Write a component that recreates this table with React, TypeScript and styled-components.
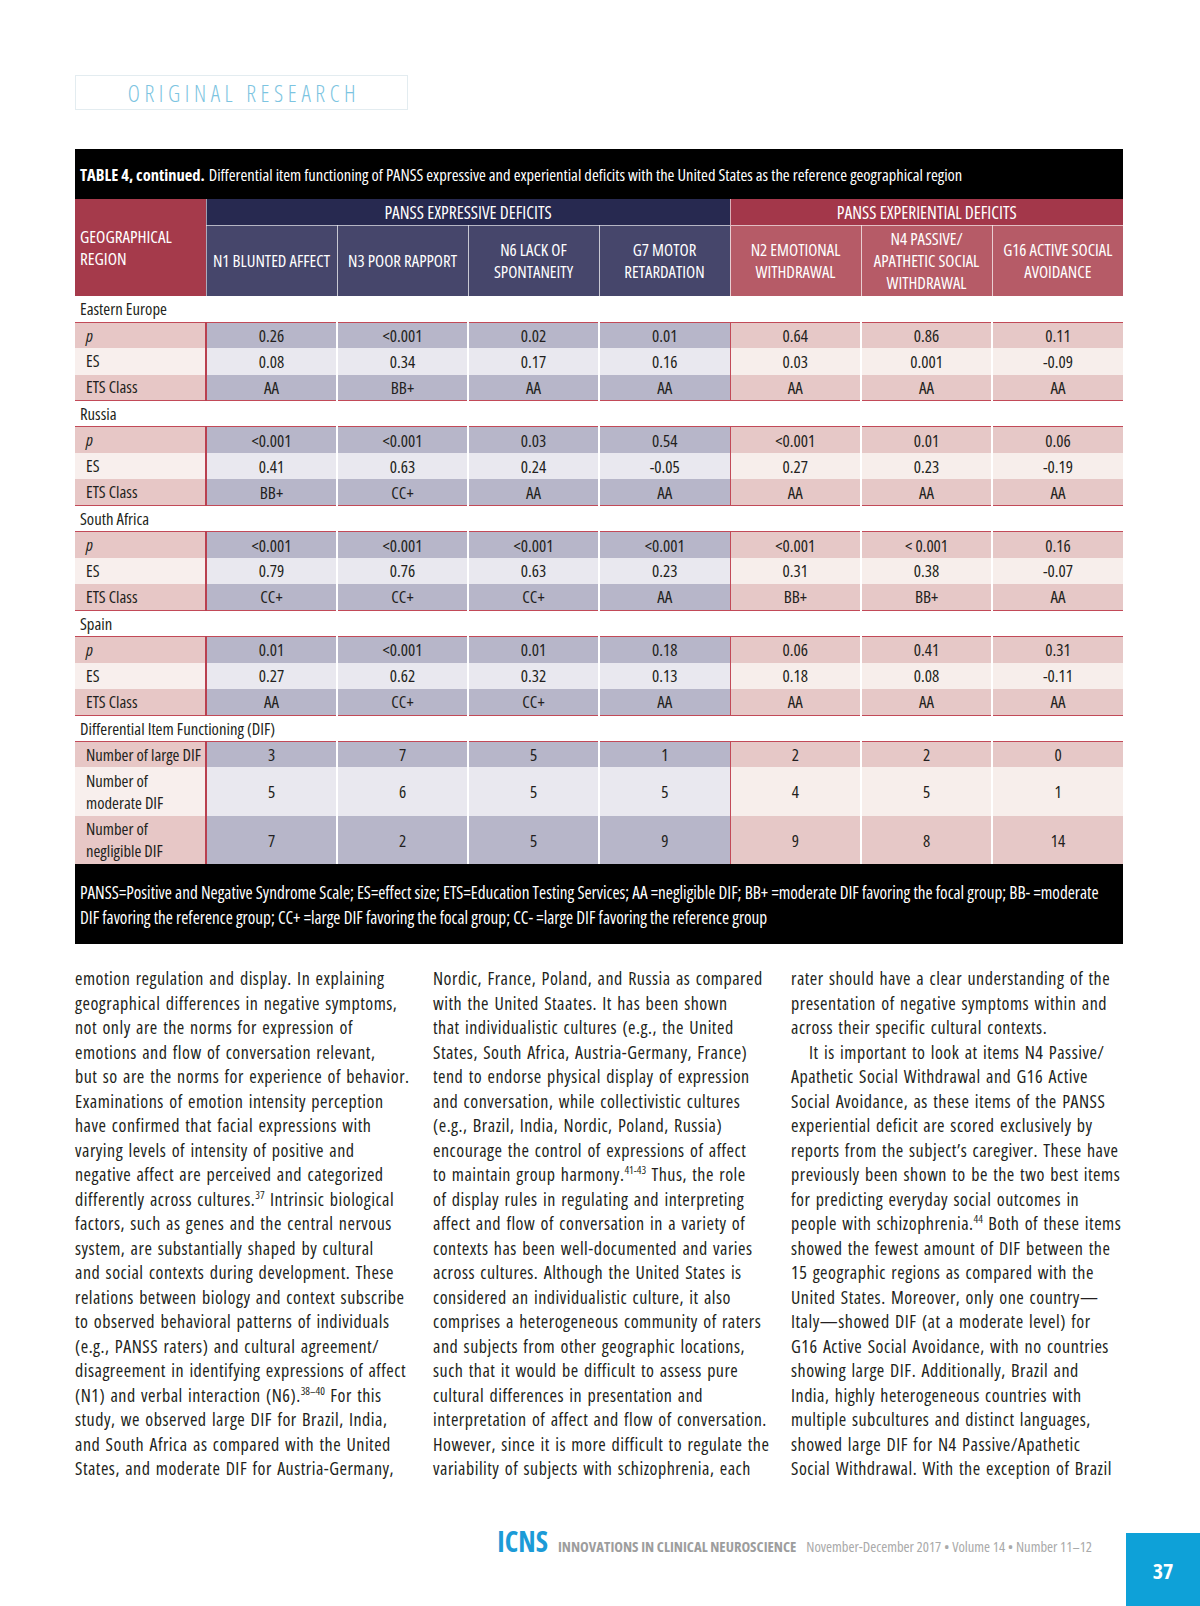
import React from 'react';
import styled, { createGlobalStyle, css } from 'styled-components';

const narrow = `"Open Sans", "Liberation Sans", sans-serif`;

const GlobalStyle = createGlobalStyle`
  html, body {
    margin: 0;
    padding: 0;
    background: #fff;
  }
  body {
    font-family: ${narrow};
    font-stretch: 75%;
    color: #231f20;
  }
`;

type Tone = 'expressive' | 'experiential';
type Shade = 'dark' | 'light';

const palette = {
  expressive: { group: '#272950', head: '#46466b', dark: '#b7b6c9', light: '#e9e8ef' },
  experiential: { group: '#a3374a', head: '#b65b67', dark: '#e6c8c7', light: '#f7eeeb' },
  label: { dark: '#e7c7c6', light: '#f8efed' },
  rule: '#c24a58',
};

const Page = styled.div`
  width: 1200px;
  height: 1606px;
  box-sizing: border-box;
  padding-top: 75px;
  display: flex;
  flex-direction: column;
  overflow: hidden;
`;

const SectionTag = styled.div`
  margin-left: 75px;
  width: 333px;
  height: 35px;
  box-sizing: border-box;
  border: 1px solid #e3ecf0;
  display: flex;
  align-items: center;
  justify-content: center;
  padding-left: 5px;
  color: #7cc4e1;
  font-size: 23px;
  font-weight: 300;
  letter-spacing: 4.6px;
`;

const TableBlock = styled.div`
  margin: 39px 0 0 75px;
  width: 1048px;
`;

const Caption = styled.div`
  height: 50px;
  background: #000;
  color: #fff;
  font-size: 16.5px;
  padding-left: 5px;
  display: flex;
  align-items: center;
  white-space: nowrap;
  overflow: hidden;

  b {
    font-weight: 700;
    margin-right: 4px;
  }
`;

const Grid = styled.table`
  width: 1048px;
  border-collapse: collapse;
  table-layout: fixed;
  font-size: 17px;

  th,
  td {
    padding: 0;
    box-sizing: border-box;
    white-space: nowrap;
  }
`;

const RegionHead = styled.th`
  background: #a53a4b;
  color: #fff;
  font-weight: 400;
  text-align: left;
  padding-left: 5px !important;
  font-size: 17.1px;
  line-height: 22px;
  border-right: 1px solid rgba(255, 255, 255, 0.55);
`;

const GroupHead = styled.th<{ $tone: Tone }>`
  height: 26px;
  background: ${(p) => palette[p.$tone].group};
  color: #fff;
  font-weight: 400;
  font-size: 17.5px;
  border-bottom: 1px solid rgba(255, 255, 255, 0.6);
  ${(p) => p.$tone === 'experiential' && css`border-left: 1px solid rgba(255, 255, 255, 0.6);`}
`;

const ColHead = styled.th<{ $tone: Tone }>`
  height: 71px;
  background: ${(p) => palette[p.$tone].head};
  color: #fff;
  font-weight: 400;
  font-size: 16.8px;
  line-height: 22px;
  border-left: 1px solid rgba(255, 255, 255, 0.7);
`;

const RegionCell = styled.td`
  height: 26.2px;
  padding-left: 5px !important;
  font-size: 16.7px;
  background: #fff;
`;

const LabelCell = styled.td<{ $shade: Shade; $top?: boolean; $bottom?: boolean }>`
  padding-left: 11px !important;
  line-height: 22px;
  font-size: 16.6px;
  background: ${(p) => palette.label[p.$shade]};
  border-right: 2px solid #b9404f;
  ${(p) => p.$top && css`border-top: 1px solid ${palette.rule};`}
  ${(p) => p.$bottom && css`border-bottom: 1px solid ${palette.rule};`}

  i {
    font-style: italic;
  }
`;

const ValueCell = styled.td<{ $tone: Tone; $shade: Shade; $split?: boolean; $top?: boolean; $bottom?: boolean }>`
  text-align: center;
  background: ${(p) => palette[p.$tone][p.$shade]};
  border-left: ${(p) => (p.$split ? `1px solid ${palette.rule}` : '2px solid #fff')};
  ${(p) => p.$top && css`border-top: 1px solid ${palette.rule};`}
  ${(p) => p.$bottom && css`border-bottom: 1px solid ${palette.rule};`}
`;

const Footnote = styled.div`
  background: #000;
  color: #fff;
  font-size: 17.2px;
  line-height: 24.5px;
  height: 80px;
  box-sizing: border-box;
  padding: 17px 5px 0;
  white-space: nowrap;
  overflow: hidden;
`;

const Columns = styled.div`
  margin: 22px 0 0 75px;
  display: grid;
  grid-template-columns: repeat(3, 340px);
  column-gap: 18px;
  font-size: 18px;
  letter-spacing: 0.5px;
  word-spacing: 1.5px;
  line-height: 24.5px;
`;

const Line = styled.span<{ $indent?: boolean }>`
  display: block;
  white-space: nowrap;
  ${(p) => p.$indent && css`padding-left: 18px;`}

  sup {
    font-size: 11px;
    letter-spacing: 0;
    line-height: 0;
    vertical-align: 7px;
  }
`;

const Footer = styled.div`
  margin-top: auto;
  height: 73px;
  display: flex;
  justify-content: flex-end;
  align-items: flex-start;
`;

const Masthead = styled.div`
  margin-right: 34px;
  height: 17px;
  line-height: 17px;
  display: flex;
  align-items: baseline;
  gap: 10px;
  white-space: nowrap;
`;

const Brand = styled.span`
  color: #1c9bd7;
  font-weight: 700;
  font-size: 28px;
`;

const Journal = styled.span`
  color: #9d9d9d;
  font-weight: 700;
  font-size: 14.7px;
`;

const Issue = styled.span`
  color: #a9a9a9;
  font-size: 14.5px;
`;

const PageNumber = styled.div`
  width: 74px;
  height: 73px;
  background: #0ea1d8;
  color: #fff;
  font-weight: 700;
  font-size: 22px;
  display: flex;
  align-items: center;
  justify-content: center;
`;

const tones: Tone[] = ['expressive', 'expressive', 'expressive', 'expressive', 'experiential', 'experiential', 'experiential'];

const regions = [
  {
    name: 'Eastern Europe',
    p: ['0.26', '<0.001', '0.02', '0.01', '0.64', '0.86', '0.11'],
    es: ['0.08', '0.34', '0.17', '0.16', '0.03', '0.001', '-0.09'],
    ets: ['AA', 'BB+', 'AA', 'AA', 'AA', 'AA', 'AA'],
  },
  {
    name: 'Russia',
    p: ['<0.001', '<0.001', '0.03', '0.54', '<0.001', '0.01', '0.06'],
    es: ['0.41', '0.63', '0.24', '-0.05', '0.27', '0.23', '-0.19'],
    ets: ['BB+', 'CC+', 'AA', 'AA', 'AA', 'AA', 'AA'],
  },
  {
    name: 'South Africa',
    p: ['<0.001', '<0.001', '<0.001', '<0.001', '<0.001', '< 0.001', '0.16'],
    es: ['0.79', '0.76', '0.63', '0.23', '0.31', '0.38', '-0.07'],
    ets: ['CC+', 'CC+', 'CC+', 'AA', 'BB+', 'BB+', 'AA'],
  },
  {
    name: 'Spain',
    p: ['0.01', '<0.001', '0.01', '0.18', '0.06', '0.41', '0.31'],
    es: ['0.27', '0.62', '0.32', '0.13', '0.18', '0.08', '-0.11'],
    ets: ['AA', 'CC+', 'CC+', 'AA', 'AA', 'AA', 'AA'],
  },
];

const difRows = [
  { label: ['Number of large DIF'], values: ['3', '7', '5', '1', '2', '2', '0'], shade: 'dark' as Shade, height: 26.2 },
  { label: ['Number of', 'moderate DIF'], values: ['5', '6', '5', '5', '4', '5', '1'], shade: 'light' as Shade, height: 49 },
  { label: ['Number of', 'negligible DIF'], values: ['7', '2', '5', '9', '9', '8', '14'], shade: 'dark' as Shade, height: 48 },
];

const columnHeads: string[][] = [
  ['N1 BLUNTED AFFECT'],
  ['N3 POOR RAPPORT'],
  ['N6 LACK OF', 'SPONTANEITY'],
  ['G7 MOTOR', 'RETARDATION'],
  ['N2 EMOTIONAL', 'WITHDRAWAL'],
  ['N4 PASSIVE/', 'APATHETIC SOCIAL', 'WITHDRAWAL'],
  ['G16 ACTIVE SOCIAL', 'AVOIDANCE'],
];

const withBreaks = (parts: string[]) =>
  parts.map((part, i) => (
    <React.Fragment key={i}>
      {i > 0 && <br />}
      {part}
    </React.Fragment>
  ));

interface DataRowProps {
  label: React.ReactNode;
  values: string[];
  shade: Shade;
  height?: number;
  top?: boolean;
  bottom?: boolean;
}

const DataRow = ({ label, values, shade, height = 26.2, top, bottom }: DataRowProps) => (
  <tr style={{ height }}>
    <LabelCell $shade={shade} $top={top} $bottom={bottom}>
      {label}
    </LabelCell>
    {values.map((v, i) => (
      <ValueCell key={i} $tone={tones[i]} $shade={shade} $split={i === 4} $top={top} $bottom={bottom}>
        {v}
      </ValueCell>
    ))}
  </tr>
);

const columnOne: React.ReactNode[] = [
  'emotion regulation and display. In explaining',
  'geographical differences in negative symptoms,',
  'not only are the norms for expression of',
  'emotions and flow of conversation relevant,',
  'but so are the norms for experience of behavior.',
  'Examinations of emotion intensity perception',
  'have confirmed that facial expressions with',
  'varying levels of intensity of positive and',
  'negative affect are perceived and categorized',
  <>differently across cultures.<sup>37</sup> Intrinsic biological</>,
  'factors, such as genes and the central nervous',
  'system, are substantially shaped by cultural',
  'and social contexts during development. These',
  'relations between biology and context subscribe',
  'to observed behavioral patterns of individuals',
  '(e.g., PANSS raters) and cultural agreement/',
  'disagreement in identifying expressions of affect',
  <>(N1) and verbal interaction (N6).<sup>38–40</sup> For this</>,
  'study, we observed large DIF for Brazil, India,',
  'and South Africa as compared with the United',
  'States, and moderate DIF for Austria-Germany,',
];

const columnTwo: React.ReactNode[] = [
  'Nordic, France, Poland, and Russia as compared',
  'with the United Staates. It has been shown',
  'that individualistic cultures (e.g., the United',
  'States, South Africa, Austria-Germany, France)',
  'tend to endorse physical display of expression',
  'and conversation, while collectivistic cultures',
  '(e.g., Brazil, India, Nordic, Poland, Russia)',
  'encourage the control of expressions of affect',
  <>to maintain group harmony.<sup>41-43</sup> Thus, the role</>,
  'of display rules in regulating and interpreting',
  'affect and flow of conversation in a variety of',
  'contexts has been well-documented and varies',
  'across cultures. Although the United States is',
  'considered an individualistic culture, it also',
  'comprises a heterogeneous community of raters',
  'and subjects from other geographic locations,',
  'such that it would be difficult to assess pure',
  'cultural differences in presentation and',
  'interpretation of affect and flow of conversation.',
  'However, since it is more difficult to regulate the',
  'variability of subjects with schizophrenia, each',
];

const columnThree: React.ReactNode[] = [
  'rater should have a clear understanding of the',
  'presentation of negative symptoms within and',
  'across their specific cultural contexts.',
  'It is important to look at items N4 Passive/',
  'Apathetic Social Withdrawal and G16 Active',
  'Social Avoidance, as these items of the PANSS',
  'experiential deficit are scored exclusively by',
  'reports from the subject’s caregiver. These have',
  'previously been shown to be the two best items',
  'for predicting everyday social outcomes in',
  <>people with schizophrenia.<sup>44</sup> Both of these items</>,
  'showed the fewest amount of DIF between the',
  '15 geographic regions as compared with the',
  'United States. Moreover, only one country—',
  'Italy—showed DIF (at a moderate level) for',
  'G16 Active Social Avoidance, with no countries',
  'showing large DIF. Additionally, Brazil and',
  'India, highly heterogeneous countries with',
  'multiple subcultures and distinct languages,',
  'showed large DIF for N4 Passive/Apathetic',
  'Social Withdrawal. With the exception of Brazil',
];

export default function App() {
  return (
    <>
      <GlobalStyle />
      <Page>
        <SectionTag>ORIGINAL RESEARCH</SectionTag>

        <TableBlock>
          <Caption>
            <b>TABLE 4, continued.</b> Differential item functioning of PANSS expressive and experiential deficits with
            the United States as the reference geographical region
          </Caption>
          <Grid>
            <colgroup>
              {Array.from({ length: 8 }).map((_, i) => (
                <col key={i} style={{ width: 131 }} />
              ))}
            </colgroup>
            <thead>
              <tr>
                <RegionHead rowSpan={2}>
                  GEOGRAPHICAL
                  <br />
                  REGION
                </RegionHead>
                <GroupHead $tone="expressive" colSpan={4}>
                  PANSS EXPRESSIVE DEFICITS
                </GroupHead>
                <GroupHead $tone="experiential" colSpan={3}>
                  PANSS EXPERIENTIAL DEFICITS
                </GroupHead>
              </tr>
              <tr>
                {columnHeads.map((h, i) => (
                  <ColHead key={i} $tone={tones[i]}>
                    {withBreaks(h)}
                  </ColHead>
                ))}
              </tr>
            </thead>
            <tbody>
              {regions.map((r) => (
                <React.Fragment key={r.name}>
                  <tr>
                    <RegionCell colSpan={8}>{r.name}</RegionCell>
                  </tr>
                  <DataRow label={<i>p</i>} values={r.p} shade="dark" top />
                  <DataRow label="ES" values={r.es} shade="light" />
                  <DataRow label="ETS Class" values={r.ets} shade="dark" bottom />
                </React.Fragment>
              ))}
              <tr>
                <RegionCell colSpan={8}>Differential Item Functioning (DIF)</RegionCell>
              </tr>
              {difRows.map((d, i) => (
                <DataRow
                  key={i}
                  label={withBreaks(d.label)}
                  values={d.values}
                  shade={d.shade}
                  height={d.height}
                  top={i === 0}
                />
              ))}
            </tbody>
          </Grid>
          <Footnote>
            PANSS=Positive and Negative Syndrome Scale; ES=effect size; ETS=Education Testing Services; AA =negligible
            DIF; BB+ =moderate DIF favoring the focal group; BB- =moderate
            <br />
            DIF favoring the reference group; CC+ =large DIF favoring the focal group; CC- =large DIF favoring the
            reference group
          </Footnote>
        </TableBlock>

        <Columns>
          <div>
            {columnOne.map((l, i) => (
              <Line key={i}>{l}</Line>
            ))}
          </div>
          <div>
            {columnTwo.map((l, i) => (
              <Line key={i}>{l}</Line>
            ))}
          </div>
          <div>
            {columnThree.map((l, i) => (
              <Line key={i} $indent={i === 3}>
                {l}
              </Line>
            ))}
          </div>
        </Columns>

        <Footer>
          <Masthead>
            <Brand>ICNS</Brand>
            <Journal>INNOVATIONS IN CLINICAL NEUROSCIENCE</Journal>
            <Issue>November-December 2017 • Volume 14 • Number 11–12</Issue>
          </Masthead>
          <PageNumber>37</PageNumber>
        </Footer>
      </Page>
    </>
  );
}
